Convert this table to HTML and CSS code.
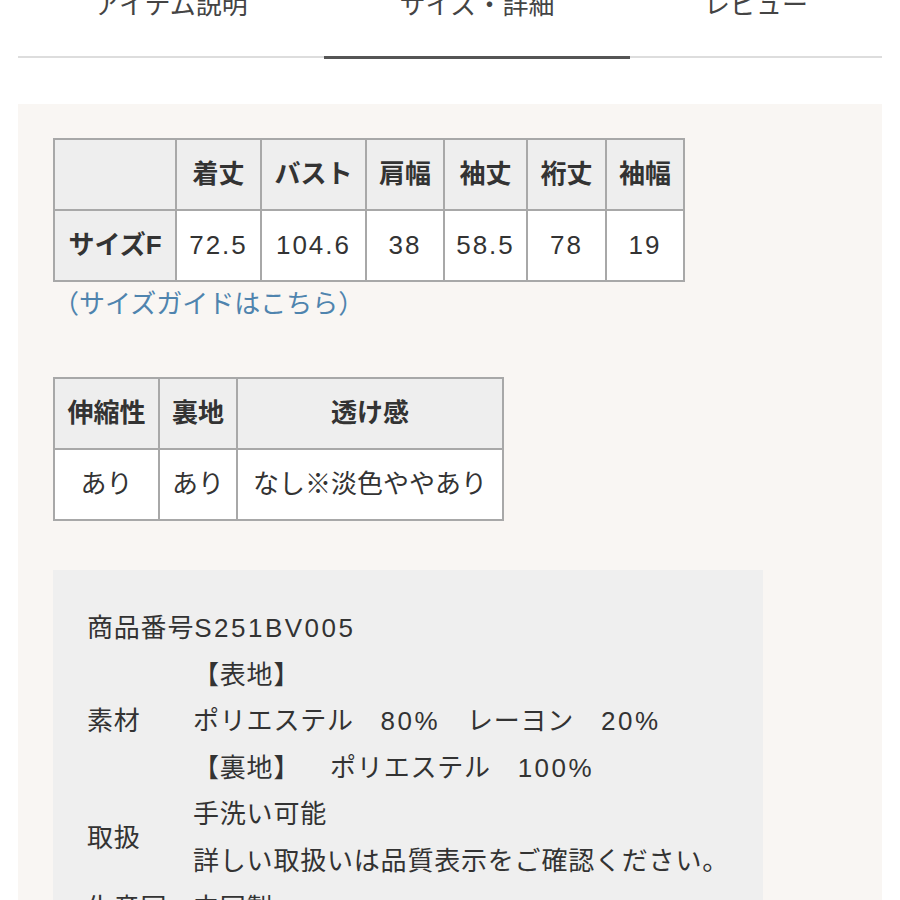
FILE: index.html
```html
<!DOCTYPE html>
<html lang="ja">
<head>
<meta charset="utf-8">
<title>サイズ・詳細</title>
<link rel="stylesheet" href="styles.css">
</head>
<body>
<nav class="tabs">
  <div class="tab tab-first">アイテム説明</div>
  <div class="tab tab-mid active">サイズ・詳細</div>
  <div class="tab tab-last">レビュー</div>
</nav>
<section class="detail">
  <table class="grid size">
    <colgroup>
      <col class="c-label"><col class="c-a"><col class="c-b"><col class="c-c"><col class="c-d"><col class="c-e"><col class="c-f">
    </colgroup>
    <tr class="head">
      <th></th><th>着丈</th><th>バスト</th><th>肩幅</th><th>袖丈</th><th>裄丈</th><th>袖幅</th>
    </tr>
    <tr>
      <th>サイズF</th><td class="num">72.5</td><td class="num">104.6</td><td class="num">38</td><td class="num">58.5</td><td class="num">78</td><td class="num">19</td>
    </tr>
  </table>
  <a class="guide" href="#">（サイズガイドはこちら）</a>
  <table class="grid feel">
    <colgroup>
      <col class="f-a"><col class="f-b"><col class="f-c">
    </colgroup>
    <tr class="head">
      <th>伸縮性</th><th>裏地</th><th>透け感</th>
    </tr>
    <tr>
      <td>あり</td><td>あり</td><td>なし※淡色ややあり</td>
    </tr>
  </table>
  <div class="spec">
    <p class="code">商品番号<span class="num">S251BV005</span></p>
    <div class="row">
      <div class="label">素材</div>
      <div class="value">
        <p>【表地】</p>
        <p>ポリエステル　<span class="num">80%</span>　レーヨン　<span class="num">20%</span></p>
        <p>【裏地】　&nbsp;&nbsp;ポリエステル　<span class="num">100%</span></p>
      </div>
    </div>
    <div class="row">
      <div class="label">取扱</div>
      <div class="value">
        <p>手洗い可能</p>
        <p>詳しい取扱いは品質表示をご確認ください。</p>
      </div>
    </div>
    <div class="row">
      <div class="label">生産国</div>
      <div class="value">
        <p>中国製</p>
      </div>
    </div>
  </div>
</section>
</body>
</html>
```
FILE: styles.css
```css
html, body {
  margin: 0;
  padding: 0;
  background: #ffffff;
}
body {
  font-family: "Liberation Sans", "Noto Sans CJK JP", "Noto Sans", sans-serif;
  color: #333333;
  font-size: 26px;
  overflow: hidden;
  height: 900px;
}
p { margin: 0; }

.num {
  letter-spacing: 2px;
}

.tabs {
  display: flex;
  align-items: flex-start;
  margin: -15px 18px 0;
}
.tab {
  line-height: 40px;
  padding-bottom: 31px;
  border-bottom: 2px solid #dddddd;
  text-align: center;
  color: #444444;
}
.tab-first { width: 306px; }
.tab-mid { width: 306px; }
.tab-last { flex: 1; }
.tab.active {
  border-bottom: 3px solid #555555;
}

.detail {
  margin: 45px 18px 0;
  background: #f9f6f3;
  padding: 34px 35px 0;
  height: 900px;
}

.grid {
  border-collapse: collapse;
  table-layout: fixed;
  border: 2px solid #a8a8a8;
}
.grid th, .grid td {
  border: 2px solid #a8a8a8;
  height: 69px;
  padding: 0;
  text-align: center;
  vertical-align: middle;
  line-height: 1.4;
  white-space: nowrap;
}
.grid th {
  background: #eeeeee;
  font-weight: 700;
  color: #333333;
}
.grid td {
  background: #ffffff;
  font-weight: 400;
  color: #333333;
}

.size { width: 632px; }
.c-label { width: 122px; }
.c-a { width: 85px; }
.c-b { width: 105px; }
.c-c { width: 78px; }
.c-d { width: 83px; }
.c-e { width: 79px; }
.c-f { width: 78px; }

.guide {
  display: block;
  margin-top: 3px;
  line-height: 39px;
  color: #4f84ae;
  text-decoration: none;
}

.feel {
  width: 451px;
  margin-top: 53px;
}
.f-a { width: 105px; }
.f-b { width: 78px; }
.f-c { width: 266px; }

.spec {
  margin-top: 49px;
  width: 710px;
  background: #efefef;
  padding: 35px 34px 0;
  box-sizing: border-box;
  line-height: 46.6px;
  height: 400px;
  letter-spacing: 0.8px;
}
.spec .num {
  letter-spacing: 2.5px;
}
.row {
  display: flex;
  align-items: center;
}
.label {
  width: 106px;
  flex: none;
}
.value {
  flex: 1;
}
```
